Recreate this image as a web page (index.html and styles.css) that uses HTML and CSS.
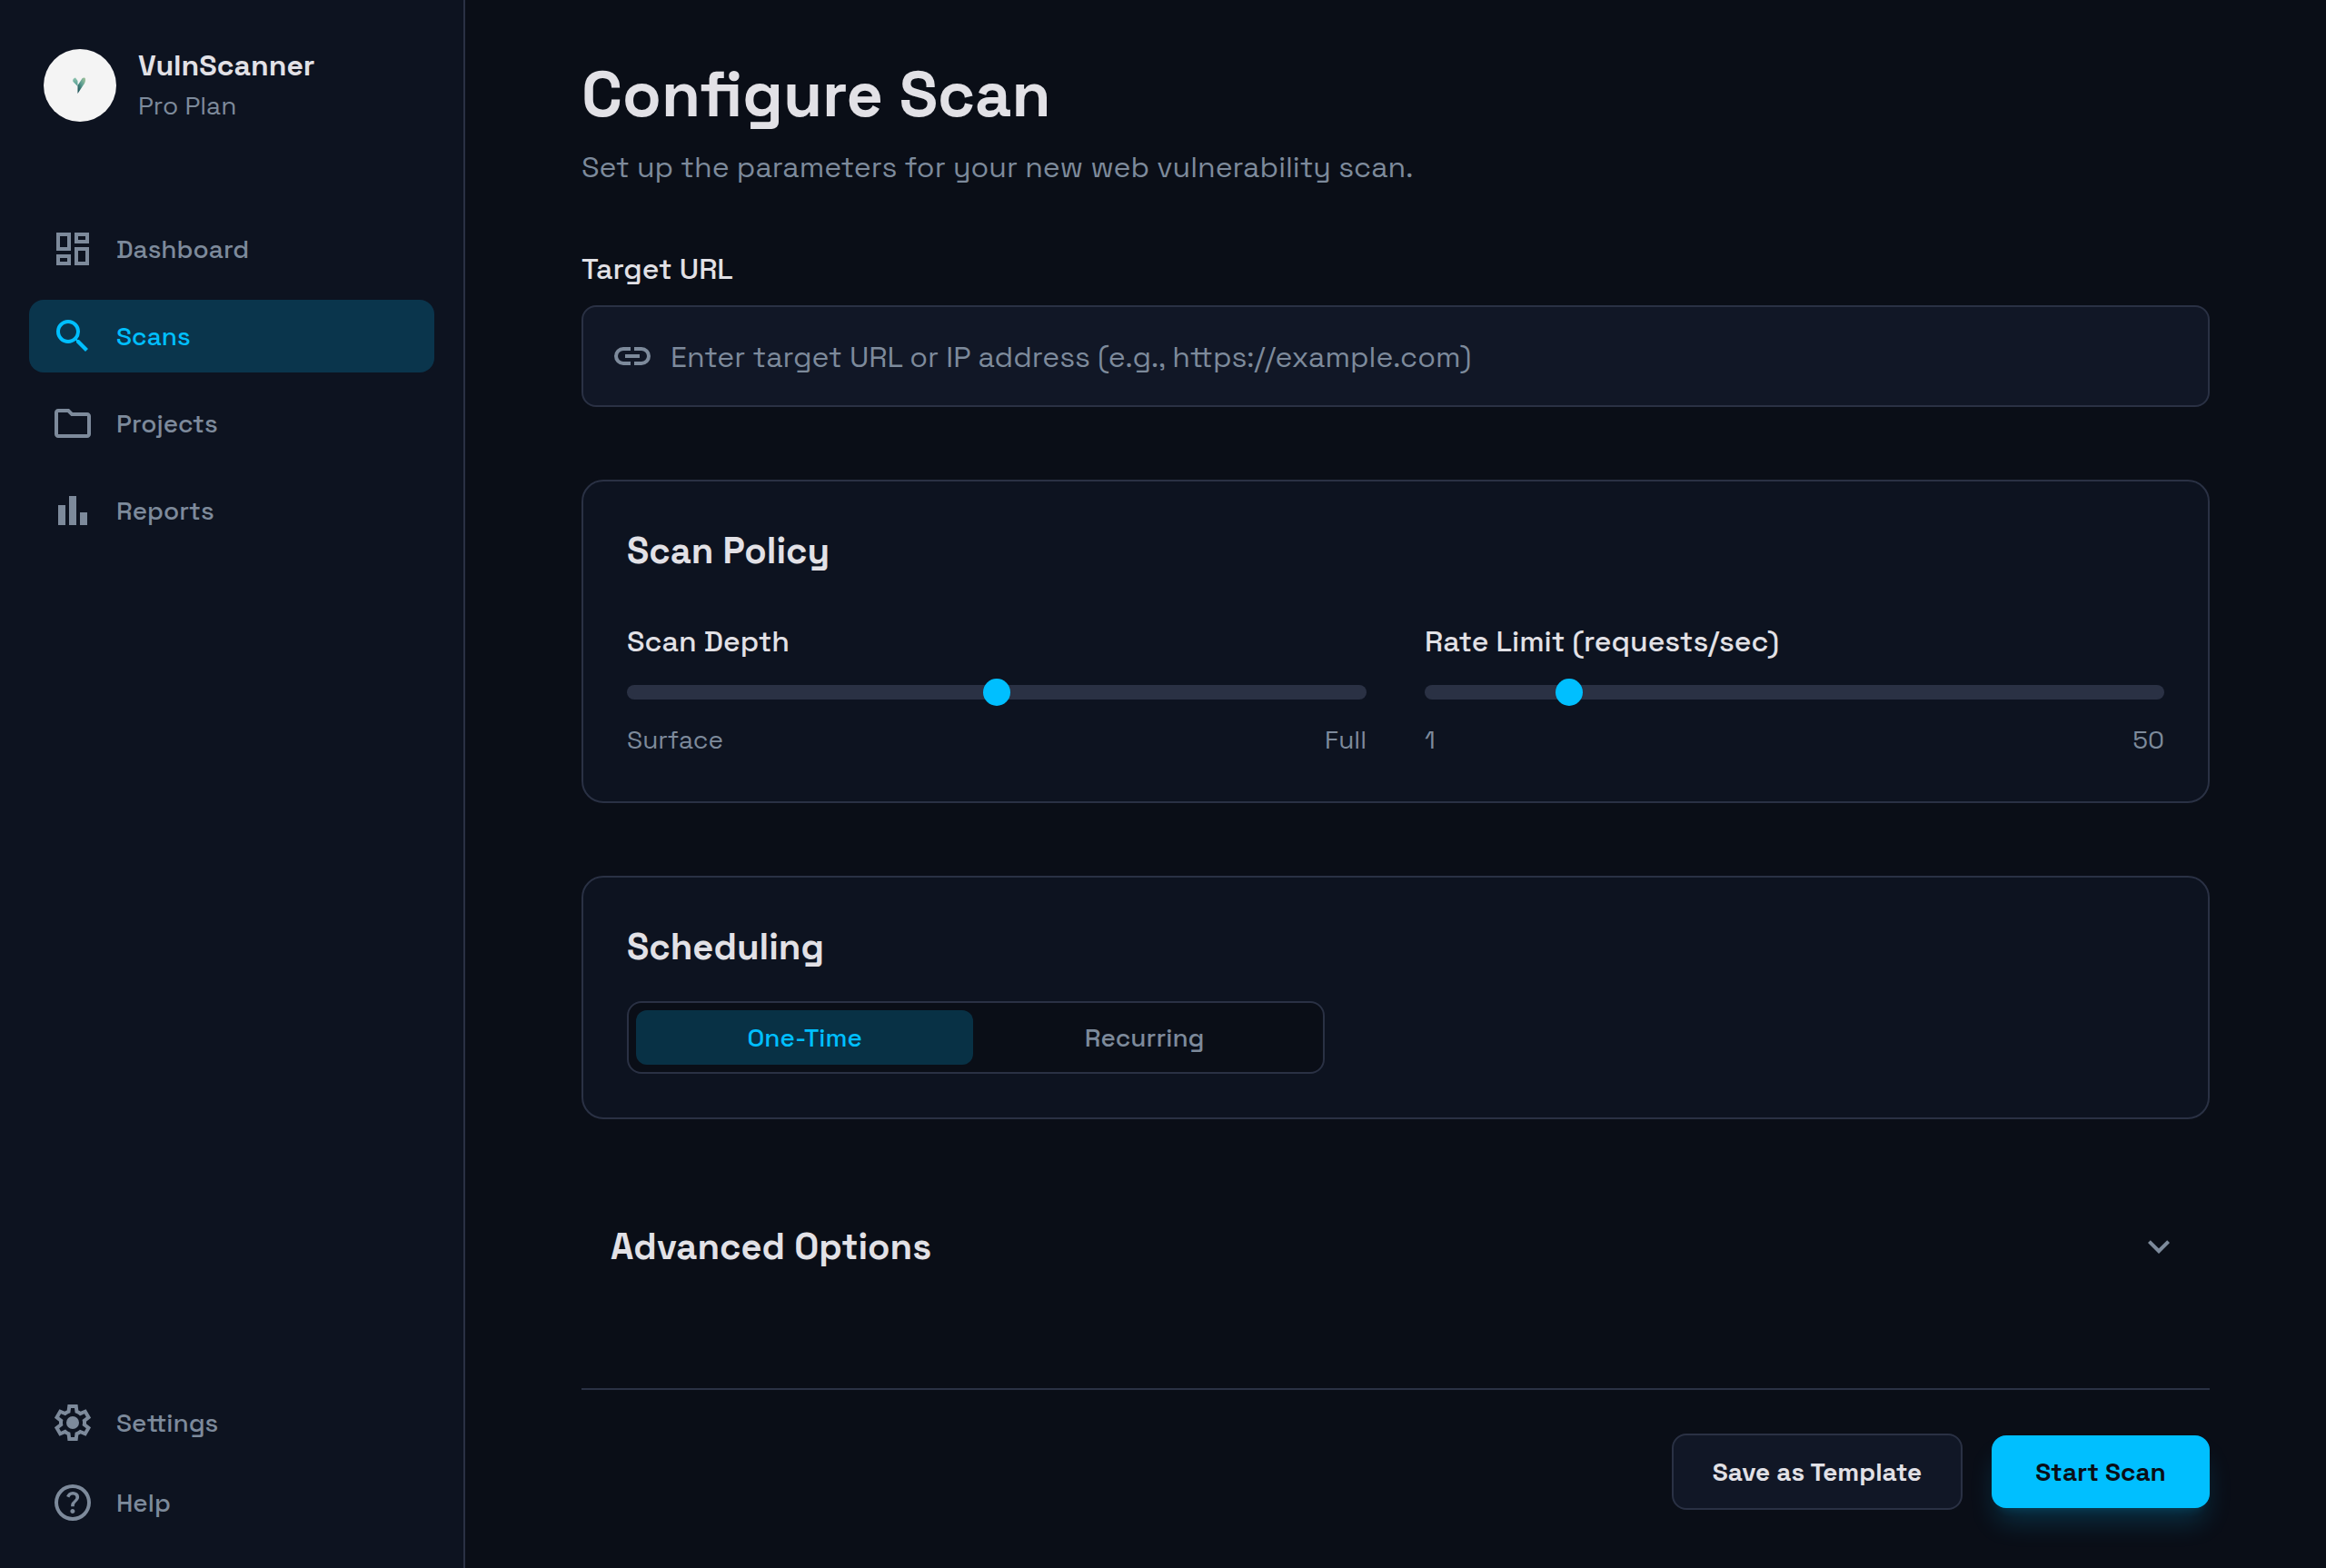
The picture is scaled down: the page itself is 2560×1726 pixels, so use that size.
FILE: index.html
```html
<!DOCTYPE html>
<html lang="en">
<head>
<meta charset="utf-8">
<title>VulnScanner – Configure Scan</title>
<meta name="viewport" content="width=device-width, initial-scale=1">
<link rel="stylesheet" href="styles.css">
</head>
<body>
<div class="app">
  <aside class="sidebar">
    <div class="profile">
      <svg class="avatar" viewBox="0 0 80 80" aria-hidden="true">
        <defs>
          <linearGradient id="leafLeft" x1="0" y1="0" x2="0" y2="1"><stop offset="0" stop-color="#8fc4ae"/><stop offset="1" stop-color="#4f9a92"/></linearGradient>
          <linearGradient id="leafRight" x1="1" y1="0" x2="0" y2="1"><stop offset="0" stop-color="#a9c79c"/><stop offset=".45" stop-color="#5d9f92"/><stop offset="1" stop-color="#0c3f48"/></linearGradient>
        </defs>
        <circle cx="40" cy="40" r="40" fill="#f4f4f4"/>
        <path d="M35 31.500C33 32 31.500 34 32.500 36L37.500 41V35Z" fill="url(#leafLeft)"/>
        <path d="M37.500 49V40L42 33C43 31.500 45.500 31 46 32.500C46.500 35 45.500 37.500 43.500 40Z" fill="url(#leafRight)"/>
      </svg>
      <div class="profile-text">
        <p class="profile-name">VulnScanner</p>
        <p class="profile-plan">Pro Plan</p>
      </div>
    </div>
    <nav class="nav" aria-label="Main">
      <a class="nav-link" href="#dashboard">
        <svg class="icon" viewBox="0 0 24 24" aria-hidden="true"><path d="M19 5v2h-4V5h4M9 5v6H5V5h4m10 8v6h-4v-6h4M9 17v2H5v-2h4M21 3h-8v6h8V3zM11 3H3v10h8V3zm10 8h-8v10h8V11zm-10 4H3v6h8v-6z"/></svg>
        Dashboard
      </a>
      <a class="nav-link nav-link-active" href="#scans" aria-current="page">
        <svg class="icon" viewBox="0 0 24 24" aria-hidden="true"><path d="M15.500 14h-.79l-.28-.27A6.471 6.471 0 0 0 16 9.500 6.500 6.500 0 1 0 9.500 16c1.610 0 3.090-.59 4.230-1.570l.27.28v.79l5 4.990L20.490 19l-4.990-5zm-6 0C7.010 14 5 11.990 5 9.500S7.010 5 9.500 5 14 7.010 14 9.500 11.990 14 9.500 14z"/></svg>
        Scans
      </a>
      <a class="nav-link" href="#projects">
        <svg class="icon" viewBox="0 0 24 24" aria-hidden="true"><path d="M9.170 6l2 2H20v10H4V6h5.170M10 4H4c-1.100 0-1.990.9-1.990 2L2 18c0 1.100.9 2 2 2h16c1.100 0 2-.9 2-2V8c0-1.100-.9-2-2-2h-8l-2-2z"/></svg>
        Projects
      </a>
      <a class="nav-link" href="#reports">
        <svg class="icon" viewBox="0 0 24 24" aria-hidden="true"><path d="M4 9h4v11H4zM10 4h4v16h-4zM16 13h4v7h-4z"/></svg>
        Reports
      </a>
    </nav>
    <nav class="nav nav-secondary" aria-label="Support">
      <a class="nav-link" href="#settings">
        <svg class="icon" viewBox="0 0 24 24" aria-hidden="true"><path fill-rule="evenodd" d="M9.250 22l-.4-3.200q-.325-.125-.612-.3t-.563-.375L4.700 19.375l-2.750-4.750 2.575-1.950Q4.500 12.500 4.500 12.337v-.675q0-.162.025-.337L1.950 9.375l2.750-4.750 2.975 1.250q.275-.2.575-.375t.6-.3l.4-3.200h5.500l.4 3.200q.325.125.613.3t.562.375l2.975-1.250 2.750 4.750-2.575 1.950q.025.175.025.337v.675q0 .163-.05.338l2.575 1.950-2.750 4.750-2.950-1.250q-.275.2-.575.375t-.6.3l-.4 3.200zM11 20h1.975l.35-2.650q.775-.2 1.438-.588t1.212-.937l2.475 1.025.975-1.700-2.150-1.625q.125-.35.175-.737T17.500 12t-.05-.787-.175-.738l2.150-1.625-.975-1.700-2.475 1.050q-.55-.575-1.212-.963t-1.438-.587L13 4h-1.975l-.35 2.650q-.775.2-1.437.588t-1.213.937L5.550 7.150l-.975 1.700 2.150 1.600q-.125.375-.175.750T6.500 12q0 .4.050.775t.175.750l-2.150 1.625.975 1.700 2.475-1.050q.55.575 1.213.963t1.437.587z"/><circle cx="12" cy="12" r="3.500"/></svg>
        Settings
      </a>
      <a class="nav-link" href="#help">
        <svg class="icon" viewBox="0 0 24 24" aria-hidden="true"><path d="M11.950 18q.525 0 .888-.363t.362-.887-.362-.888-.888-.362-.887.362-.363.888.363.887.887.363m-.9-3.850h1.850q0-.825.188-1.300t1.062-1.300q.65-.65 1.025-1.238T15.550 8.900q0-1.400-1.025-2.150T12.100 6q-1.425 0-2.312.75T8.550 8.550l1.650.65q.125-.45.563-.975T12.100 7.700q.8 0 1.200.438t.4.962q0 .5-.3.938t-.75.812q-1.100.975-1.350 1.475t-.25 1.825M12 22q-2.075 0-3.900-.787t-3.175-2.138-2.137-3.175T2 12t.788-3.900 2.137-3.175T8.100 2.788 12 2t3.900.788 3.175 2.137T21.213 8.100 22 12t-.787 3.900-2.138 3.175-3.175 2.138T12 22m0-2q3.350 0 5.675-2.325T20 12t-2.325-5.675T12 4 6.325 6.325 4 12t2.325 5.675T12 20"/></svg>
        Help
      </a>
    </nav>
  </aside>

  <main class="main">
    <header class="page-header">
      <h1 class="page-title">Configure Scan</h1>
      <p class="page-subtitle">Set up the parameters for your new web vulnerability scan.</p>
    </header>

    <form class="form">
      <div class="field">
        <label class="label" for="target">Target URL</label>
        <div class="input-box">
          <svg class="icon" viewBox="0 0 24 24" aria-hidden="true"><path d="M11 17H7q-2.075 0-3.538-1.463T2 12t1.462-3.538T7 7h4v2H7q-1.250 0-2.125.875T4 12t.875 2.125T7 15h4zm-3-4v-2h8v2zm5 4v-2h4q1.250 0 2.125-.875T20 12t-.875-2.125T17 9h-4V7h4q2.075 0 3.538 1.462T22 12t-1.463 3.538T17 17z"/></svg>
          <input class="input" id="target" type="text" placeholder="Enter target URL or IP address (e.g., https://example.com)">
        </div>
      </div>

      <section class="card">
        <h2 class="section-title">Scan Policy</h2>
        <div class="sliders">
          <div class="slider">
            <label class="label" for="depth">Scan Depth</label>
            <input class="range" id="depth" type="range" min="0" max="100" value="50">
            <div class="range-ends"><span>Surface</span><span>Full</span></div>
          </div>
          <div class="slider">
            <label class="label" for="rate">Rate Limit (requests/sec)</label>
            <input class="range" id="rate" type="range" min="1" max="50" value="10">
            <div class="range-ends"><span>1</span><span>50</span></div>
          </div>
        </div>
      </section>

      <section class="card card-scheduling">
        <h2 class="section-title">Scheduling</h2>
        <div class="segmented" role="group" aria-label="Scheduling">
          <button class="segment segment-active" type="button" aria-pressed="true">One-Time</button>
          <button class="segment" type="button" aria-pressed="false">Recurring</button>
        </div>
      </section>

      <button class="disclosure" type="button" aria-expanded="false">
        <span class="section-title">Advanced Options</span>
        <svg class="icon" viewBox="0 0 24 24" aria-hidden="true"><path d="M16.590 8.090L12 12.670 7.410 8.090 6 9.500l6 6 6-6z"/></svg>
      </button>

      <footer class="actions">
        <button class="button button-secondary" type="button">Save as Template</button>
        <button class="button button-primary" type="submit">Start Scan</button>
      </footer>
    </form>
  </main>
</div>
</body>
</html>
```
FILE: styles.css
```css
:root {
  --bg: #0a0e17;
  --surface: #0d1320;
  --field: #111726;
  --border: #2a3144;
  --text: #e2e1e6;
  --muted: #7d8a9b;
  --accent: #00bfff;
}

* {
  box-sizing: border-box;
}

body,
h1,
h2,
p {
  margin: 0;
}

body {
  background: var(--bg);
  color: var(--text);
  font-family: "Space Grotesk", Inter, "Liberation Sans", sans-serif;
  font-size: 28px;
  line-height: 40px;
}

button,
input {
  font: inherit;
  color: inherit;
}

button {
  cursor: pointer;
}

.app {
  display: flex;
  min-height: 100vh;
}

.icon {
  flex: none;
  width: 48px;
  height: 48px;
  fill: currentColor;
}

/* Sidebar */

.sidebar {
  flex: none;
  display: flex;
  flex-direction: column;
  width: 512px;
  padding: 50px 32px 32px;
  background: var(--surface);
  border-right: 2px solid var(--border);
}

.profile {
  display: flex;
  align-items: center;
  gap: 24px;
  padding: 0 16px;
  margin-bottom: 96px;
}

.avatar {
  width: 80px;
  height: 80px;
}

.profile-text {
  line-height: 44px;
}

.profile-name {
  font-size: 32px;
  font-weight: 700;
}

.profile-plan {
  color: var(--muted);
}

.nav {
  display: flex;
  flex-direction: column;
  gap: 16px;
}

.nav-secondary {
  gap: 8px;
  margin-top: auto;
}

.nav-link {
  display: flex;
  align-items: center;
  gap: 24px;
  height: 80px;
  padding: 0 24px;
  border-radius: 16px;
  color: var(--muted);
  font-weight: 500;
  text-decoration: none;
}

.nav-link-active {
  background: rgb(0 191 255 / 20%);
  color: var(--accent);
}

/* Main column */

.main {
  flex: 1;
  min-width: 0;
  padding: 66px 128px 64px;
}

.page-header {
  display: grid;
  gap: 16px;
  margin-bottom: 64px;
}

.page-title {
  font-size: 70px;
  font-weight: 700;
  line-height: 76px;
}

.page-subtitle {
  font-size: 32px;
  line-height: 52px;
  color: var(--muted);
}

.form {
  display: flex;
  flex-direction: column;
  gap: 80px;
}

.field {
  display: grid;
  gap: 18px;
}

.label {
  font-size: 32px;
  font-weight: 500;
  line-height: 44px;
}

.input-box {
  display: flex;
  align-items: center;
  gap: 18px;
  height: 112px;
  padding: 0 30px;
  background: var(--field);
  border: 2px solid var(--border);
  border-radius: 16px;
  color: var(--muted);
}

.input {
  flex: 1;
  min-width: 0;
  height: 100%;
  padding: 2px 0 0;
  background: none;
  border: 0;
  outline: 0;
  color: var(--text);
  font-size: 32px;
}

.input::placeholder {
  color: var(--muted);
  opacity: 1;
}

.card {
  display: flex;
  flex-direction: column;
  gap: 48px;
  padding: 48px;
  background: var(--surface);
  border: 2px solid var(--border);
  border-radius: 24px;
}

.card-scheduling {
  gap: 30px;
}

.section-title {
  font-size: 40px;
  font-weight: 700;
  line-height: 58px;
}

.sliders {
  display: grid;
  grid-template-columns: 1fr 1fr;
  gap: 64px;
}

.slider {
  display: flex;
  flex-direction: column;
}

.range {
  appearance: none;
  width: 100%;
  height: 32px;
  margin: 18px 0 16px;
  background: none;
}

.range::-webkit-slider-runnable-track {
  height: 16px;
  background: var(--border);
  border-radius: 8px;
}

.range::-webkit-slider-thumb {
  appearance: none;
  width: 30px;
  height: 30px;
  margin-top: -7px;
  background: var(--accent);
  border-radius: 50%;
}

.range-ends {
  display: flex;
  justify-content: space-between;
  color: var(--muted);
}

.segmented {
  display: flex;
  width: 100%;
  max-width: 768px;
  padding: 8px;
  background: var(--bg);
  border: 2px solid var(--border);
  border-radius: 16px;
}

.segment {
  flex: 1 1 auto;
  height: 60px;
  padding: 0 16px;
  background: none;
  border: 0;
  border-radius: 12px;
  color: var(--muted);
  font-weight: 500;
}

.segment-active {
  background: rgb(0 191 255 / 20%);
  color: var(--accent);
}

.disclosure {
  display: flex;
  align-items: center;
  justify-content: space-between;
  padding: 32px 32px 30px;
  background: none;
  border: 0;
}

.disclosure .icon {
  color: var(--muted);
}

.actions {
  display: flex;
  align-items: center;
  justify-content: flex-end;
  gap: 32px;
  margin-top: 16px;
  padding-top: 48px;
  border-top: 2px solid var(--border);
}

.button {
  height: 80px;
  border: 0;
  border-radius: 16px;
  font-weight: 700;
}

.button-secondary {
  width: 320px;
  height: 84px;
  background: var(--field);
  border: 2px solid var(--border);
}

.button-primary {
  width: 240px;
  background: var(--accent);
  color: var(--bg);
  box-shadow: 0 20px 30px -6px rgb(0 191 255 / 20%), 0 8px 12px -8px rgb(0 191 255 / 20%);
}
```
